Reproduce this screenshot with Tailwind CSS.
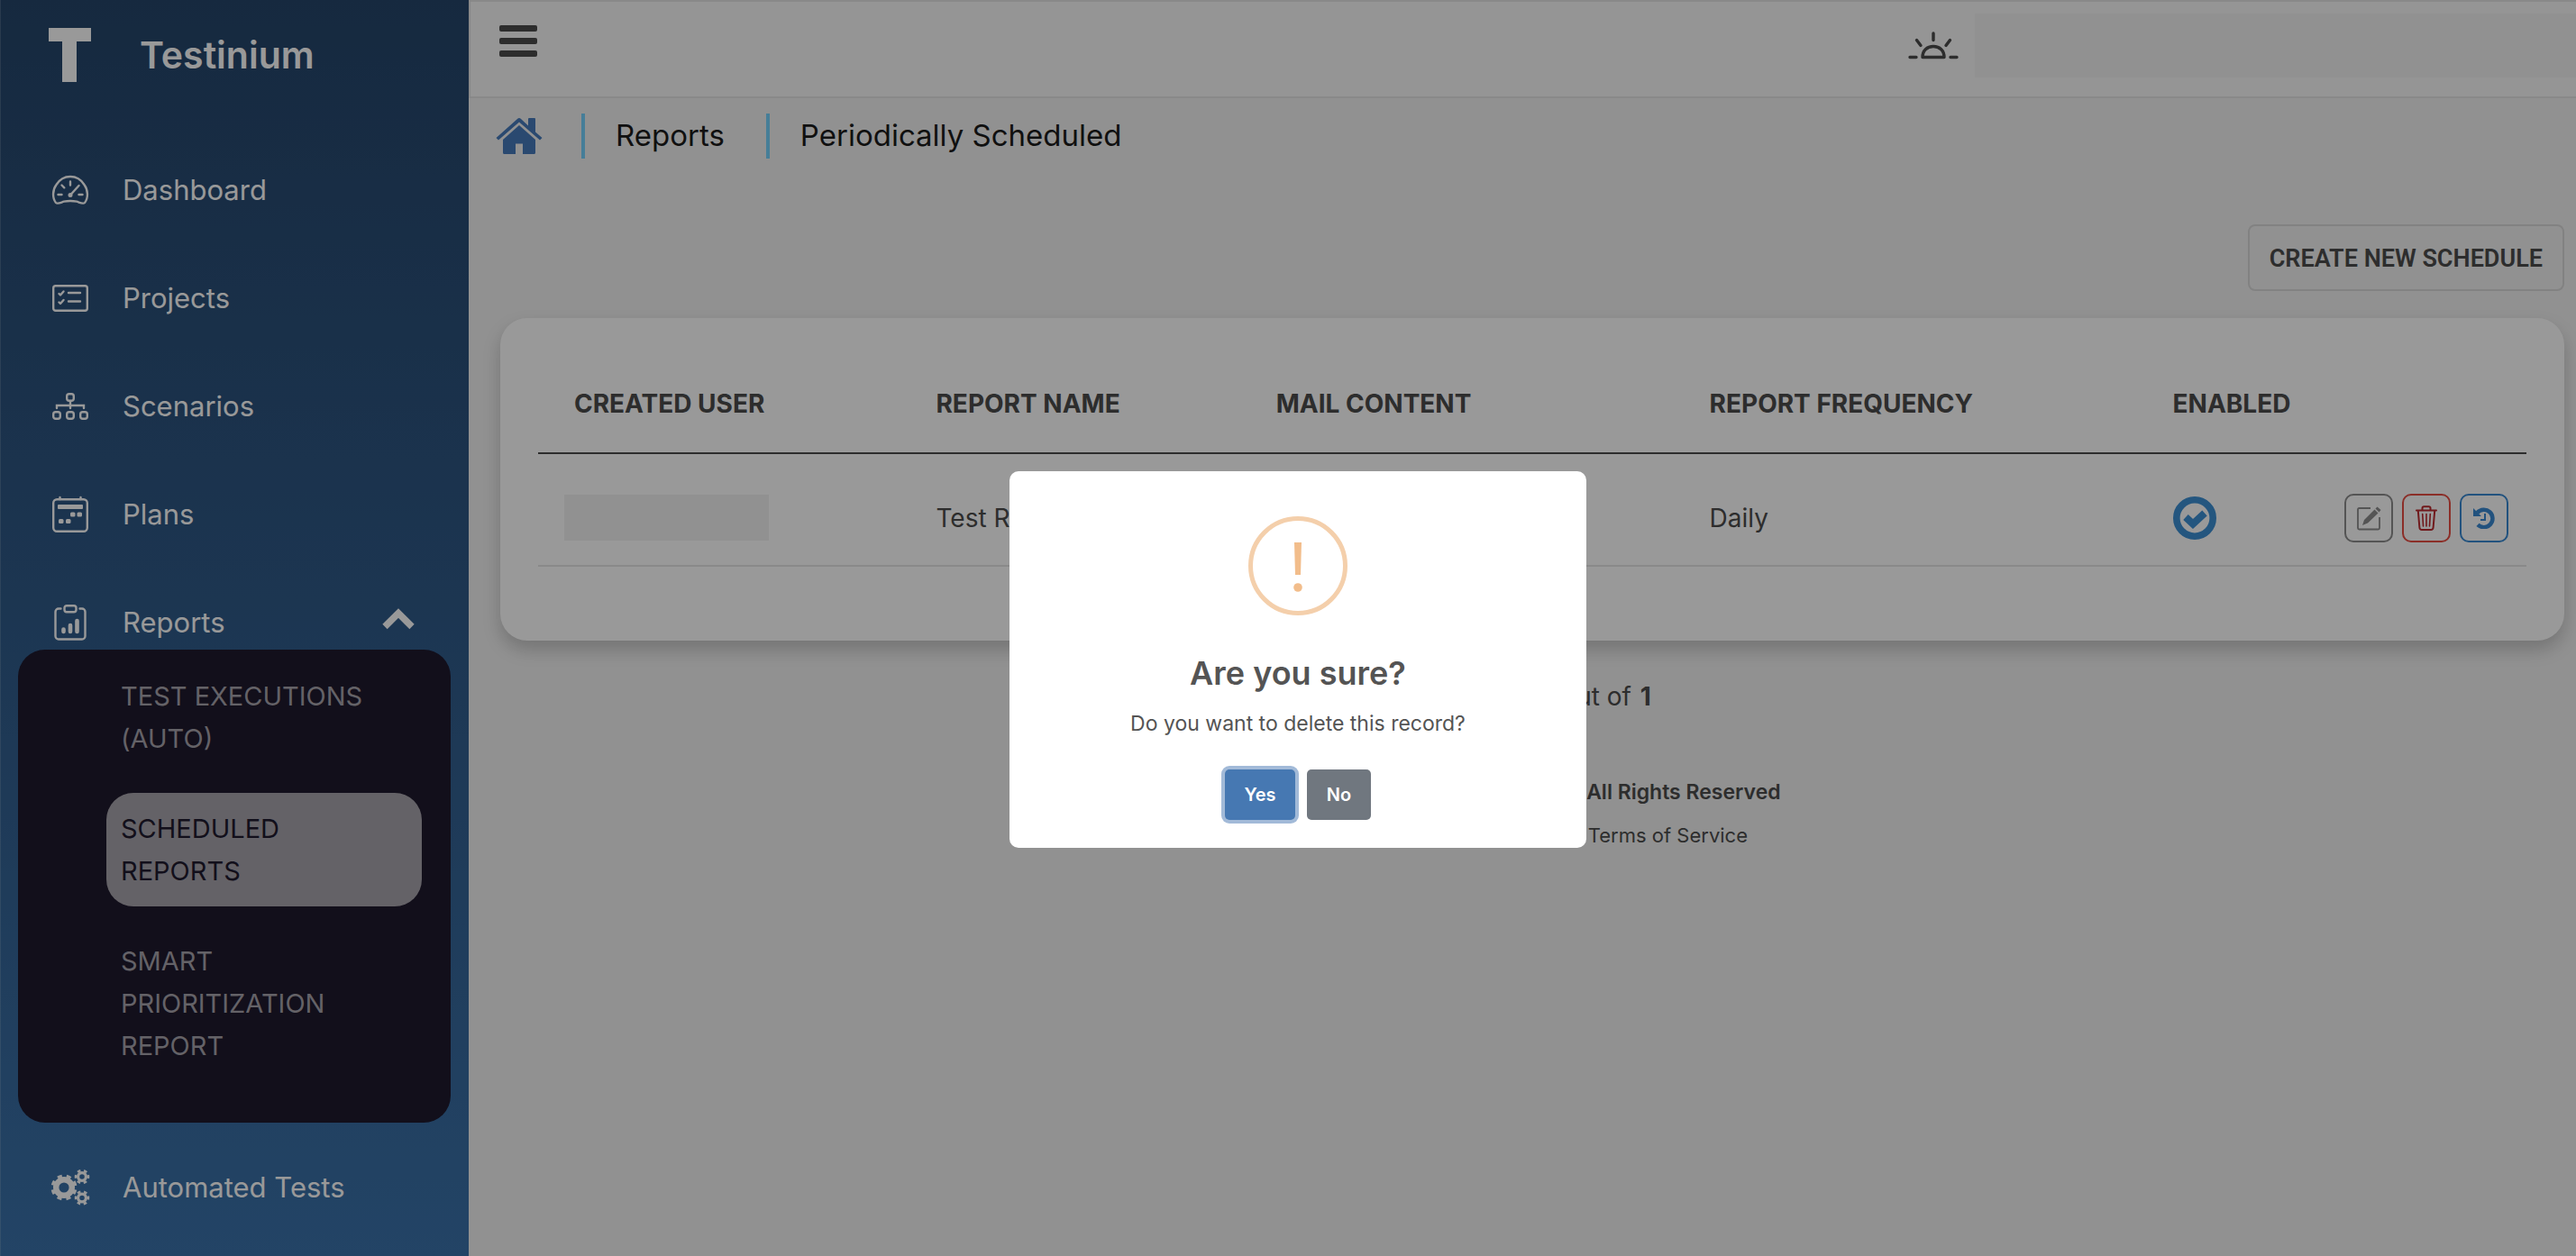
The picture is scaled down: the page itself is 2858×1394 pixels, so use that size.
<!DOCTYPE html>
<html lang="en">
<head>
<meta charset="utf-8">
<meta name="viewport" content="width=device-width, initial-scale=1">
<title>Testinium - Periodically Scheduled</title>
<script src="https://cdn.jsdelivr.net/npm/@tailwindcss/browser@4"></script>
</head>
<body class="font-['Inter',sans-serif] bg-[#f2f2f2] text-[#4b4b4b]">
<div class="flex min-h-screen">

  <!-- Sidebar -->
  <aside class="w-[520px] shrink-0 border-l border-white/15 bg-linear-to-b from-[#25456a] to-[#3b72aa] text-white">
    <a href="#" class="flex h-[121px] items-center pl-[53px]">
      <svg class="h-[60px] w-[47px]" viewBox="0 0 47 60" fill="currentColor" aria-hidden="true"><rect width="47" height="15"/><rect x="15" width="16" height="60"/></svg>
      <span class="pl-[54px] text-[41px] font-semibold leading-[60px]">Testinium</span>
    </a>
    <nav class="pt-[60px] text-[31px]">
      <ul class="flex flex-col gap-[60px]">
        <li><a href="#" class="flex h-[60px] items-center gap-9 pl-[55px]">
          <svg class="h-11 w-11" viewBox="0 0 44 44" fill="none" stroke="currentColor" stroke-width="2.4" stroke-linecap="round" aria-hidden="true">
            <path d="M6 36C2 31 2 22 6.500 16C14 4 30 4 37.500 16C42 22 42 31 38 36C36 38 32 35.500 29 34.700Q22 33.200 15 34.700C12 35.500 8 38 6 36Z"/>
            <path d="M22 12.500v4M12.500 16.500l2.800 2.800M8.500 27h4M31.500 27h4"/><path d="M22 27.500L31.500 17"/><circle cx="22" cy="27.500" r="1.300" fill="currentColor"/>
          </svg>Dashboard</a></li>
        <li><a href="#" class="flex h-[60px] items-center gap-9 pl-[55px]">
          <svg class="h-11 w-11" viewBox="0 0 44 44" fill="none" stroke="currentColor" stroke-width="2.400" stroke-linecap="round" stroke-linejoin="round" aria-hidden="true">
            <rect x="3.200" y="8.200" width="37.600" height="27.600" rx="2.500"/><path d="M20 16h13M20 25.500h13M9.500 17l1.500 1.500l3.500-4M9.500 26.500l1.500 1.500l3.500-4"/>
          </svg>Projects</a></li>
        <li><a href="#" class="flex h-[60px] items-center gap-9 pl-[55px]">
          <svg class="h-11 w-11" viewBox="0 0 44 44" fill="none" stroke="currentColor" stroke-width="2.400" stroke-linecap="round" aria-hidden="true">
            <rect x="18.200" y="8.200" width="7.600" height="7.600" rx="2.500"/><rect x="3.200" y="28.200" width="7.600" height="7.600" rx="2.500"/><rect x="18.200" y="28.200" width="7.600" height="7.600" rx="2.500"/><rect x="33.200" y="28.200" width="7.600" height="7.600" rx="2.500"/>
            <path d="M22 16v8M7 24v-3h30v3"/>
          </svg>Scenarios</a></li>
        <li><a href="#" class="flex h-[60px] items-center gap-9 pl-[55px]">
          <svg class="h-11 w-11" viewBox="0 0 44 44" fill="none" stroke="currentColor" stroke-width="2.400" stroke-linecap="round" aria-hidden="true">
            <rect x="3.200" y="5.200" width="37.600" height="35.600" rx="4"/><path d="M10.500 3v2M33.500 3v2"/>
            <g fill="currentColor" stroke="none"><rect x="8" y="11" width="28" height="5" rx="1"/><rect x="22" y="19.500" width="5.500" height="5" rx="1.500"/><rect x="29.500" y="19.500" width="5.500" height="5" rx="1.500"/><rect x="9" y="27" width="5.500" height="5" rx="1.500"/><rect x="17" y="27" width="5.500" height="5" rx="1.500"/></g>
          </svg>Plans</a></li>
        <li>
          <a href="#" class="flex h-[60px] items-center gap-9 pl-[55px] pr-[60px]">
            <svg class="h-11 w-11" viewBox="0 0 44 44" fill="none" stroke="currentColor" stroke-width="2.400" stroke-linecap="round" aria-hidden="true">
              <path d="M11.500 6.500H9A3.500 3.500 0 0 0 5.500 10v27A3.500 3.500 0 0 0 9 40.500h26A3.500 3.500 0 0 0 38.500 37V10A3.500 3.500 0 0 0 35 6.500H32.500"/><rect x="15.500" y="3.200" width="13" height="7" rx="2.500"/>
              <path d="M14.500 29.500v2.500M22 25v7M29.500 20v12" stroke-width="4.600"/>
            </svg>
            <span class="flex-1">Reports</span>
            <svg class="mb-2 h-6 w-9" viewBox="0 0 36 24" fill="none" stroke="currentColor" stroke-width="7.500" stroke-linejoin="miter" aria-hidden="true"><path d="M3 20.500L18 5.500L33 20.500"/></svg>
          </a>
          <ul class="ml-[19px] mr-5 flex flex-col gap-[21px] rounded-[30px] bg-[#1e192d] pt-3 pr-8 pb-[46px] pl-[98px] text-[29px] leading-[47px] text-[#a7a3ac]">
            <li><a href="#" class="block rounded-[30px] p-4">TEST EXECUTIONS (AUTO)</a></li>
            <li><a href="#" aria-current="page" class="block rounded-[30px] bg-[#a7a3ac] p-4 text-[#1e192d]">SCHEDULED<br>REPORTS</a></li>
            <li><a href="#" class="block rounded-[30px] p-4">SMART PRIORITIZATION REPORT</a></li>
          </ul>
        </li>
        <li class="-mt-[18px]"><a href="#" class="flex h-[60px] items-center gap-9 pl-[55px]">
          <svg class="h-11 w-11" viewBox="0 0 44 44" fill="none" stroke="currentColor" aria-hidden="true">
            <circle cx="15" cy="22" r="8.800" stroke-width="6.400"/><circle cx="15" cy="22" r="12.700" stroke-width="3.600" stroke-dasharray="4.987 4.987" transform="rotate(11 15 22)"/>
            <circle cx="35" cy="10" r="4.400" stroke-width="3.200"/><circle cx="35" cy="10" r="6.900" stroke-width="2.800" stroke-dasharray="3.613 3.613" transform="rotate(-15 35 10)"/>
            <circle cx="35" cy="33.500" r="4.400" stroke-width="3.200"/><circle cx="35" cy="33.500" r="6.900" stroke-width="2.800" stroke-dasharray="3.613 3.613" transform="rotate(-15 35 33.500)"/>
          </svg>Automated Tests</a></li>
      </ul>
    </nav>
  </aside>

  <!-- Content -->
  <div class="min-w-0 flex-1">
    <header class="flex h-[109px] items-start justify-between border-2 border-r-0 border-[#e4e4e4] bg-[#f8f8f8]">
      <button type="button" aria-label="Toggle menu" class="ml-8 mt-[26px] flex w-[42px] flex-col gap-[7px]">
        <span class="h-[7px] rounded-xs bg-[#4b4b4b]"></span><span class="h-[7px] rounded-xs bg-[#4b4b4b]"></span><span class="h-[7px] rounded-xs bg-[#4b4b4b]"></span>
      </button>
      <div class="flex items-start">
        <button type="button" aria-label="Toggle theme" class="mr-[18px] mt-[33px]">
          <svg class="h-8 w-14" viewBox="0 0 56 32" fill="none" stroke="#4b4b4b" stroke-width="3.400" stroke-linecap="round" stroke-linejoin="round" aria-hidden="true"><path d="M28 2v7.500M9.500 9.500l4.500 6M46.500 9.500l-4.500 6M2 28.500h7M47 28.500h7M16 28.500c0-7.500 5-12 12-12s12 4.500 12 12z"/></svg>
        </button>
        <div class="mt-[13px] h-[71px] w-[667px] bg-[#f2f2f2]"></div>
      </div>
    </header>

    <nav aria-label="Breadcrumb" class="flex h-[84px] items-center pl-[30px] text-[33px] text-[#1c1c1c]">
      <a href="#" aria-label="Home"><svg class="h-10 w-[52px]" viewBox="0 0 52 40" fill="#467bbb" aria-hidden="true"><path d="M26 0Q27 0 28 1L36 8.500V1Q36 0 37 0H43Q44 0 44 1V15.500L51.500 22L49 24.500L26 4.500L3 24.500L.5 22L24 1Q25 0 26 0Z"/><path d="M26 8L44 24V38.500Q44 40 42.500 40H30V28.500H22V40H9.500Q8 40 8 38.500V24Z"/></svg></a>
      <span class="ml-[43px] h-[50px] w-1 bg-[#76d2fd]"></span>
      <a href="#" class="ml-[34px]">Reports</a>
      <span class="ml-[46px] h-[50px] w-1 bg-[#76d2fd]"></span>
      <span class="ml-[34px]">Periodically Scheduled</span>
    </nav>

    <main class="pl-[35px] pr-[13px] pt-14">
      <div class="flex justify-end">
        <button type="button" class="h-[74px] rounded-lg border-2 border-[#d9d9d9] px-[22px] pt-0.5 font-['Roboto',sans-serif] text-[27px] font-semibold">CREATE NEW SCHEDULE</button>
      </div>
      <section class="mt-[30px] rounded-[30px] bg-white px-[42px] pb-[82px] pt-[38px] shadow-[0_10px_20px_rgba(0,0,0,0.2)]">
        <table class="w-full table-fixed text-left text-[28px]">
          <colgroup><col class="w-[18.200%]"><col class="w-[17.100%]"><col class="w-[21.800%]"><col class="w-[23.300%]"><col></colgroup>
          <thead>
            <tr class="h-[112px] border-b-2 border-[#4b4b4b]">
              <th scope="col" class="pl-10 pt-0.5 font-bold">CREATED USER</th><th scope="col" class="pl-10 pt-0.5 font-bold">REPORT NAME</th><th scope="col" class="pl-10 pt-0.5 font-bold">MAIL CONTENT</th><th scope="col" class="pl-10 pt-0.5 font-bold">REPORT FREQUENCY</th><th scope="col" class="pl-10 pt-0.5 font-bold">ENABLED</th>
            </tr>
          </thead>
          <tbody>
            <tr class="h-[125px] border-b-2 border-[#e4e4e4]">
              <td class="pl-[29px] pt-[18px]"><div class="h-[51px] w-[227px] bg-[#f2f2f2]"></div></td>
              <td class="pl-10 pt-[18px]">Test Report</td>
              <td class="pt-[18px]"></td>
              <td class="pl-10 pt-[18px]">Daily</td>
              <td class="pl-10 pr-5 pt-[18px]">
                <div class="flex items-center justify-between">
                  <svg class="h-12 w-12" viewBox="0 0 48 48" fill="none" stroke="#3c8fd4" role="img" aria-label="Enabled"><circle cx="24" cy="24" r="20.200" stroke-width="7.600"/><path d="M14 23L22 30.500L35 18.500" stroke-width="8" stroke-linejoin="miter"/></svg>
                  <div class="flex gap-[10px]">
                    <button type="button" aria-label="Edit" class="grid size-[54px] place-items-center rounded-[10px] border-2 border-[#8c8c8c]">
                      <svg class="h-7 w-7" viewBox="0 0 28 28" fill="none" stroke="#8c8c8c" stroke-width="1.800" aria-hidden="true"><path d="M16 3H3.500Q2 3 2 4.500V25Q2 26.500 3.500 26.500H24.500Q26 26.500 26 25V13"/><path d="M7 22L9 16L20.500 4.500L24.500 8.500L13 19.500ZM21.500 3.500L23.500 1.500L27.500 5L25.500 7.500Z" fill="#8c8c8c" stroke="none"/></svg>
                    </button>
                    <button type="button" aria-label="Delete" class="grid size-[54px] place-items-center rounded-[10px] border-2 border-[#e84e43]">
                      <svg class="h-7 w-7" viewBox="0 0 28 28" fill="none" stroke="#bb2b2f" stroke-width="2" stroke-linecap="round" stroke-linejoin="round" aria-hidden="true"><path d="M3 5.500H25M9.500 5V3Q9.500 1.200 11.300 1.200H16.700Q18.500 1.200 18.500 3V5M4.800 6L6.400 24.500Q6.600 27 9 27H19Q21.400 27 21.600 24.500L23.200 6"/><path d="M9.700 9.500L10.500 23M14 9.500V23M18.300 9.500L17.500 23" stroke-width="1.600"/></svg>
                    </button>
                    <button type="button" aria-label="Run again" class="grid size-[54px] place-items-center rounded-[10px] border-2 border-[#3989d2]">
                      <svg class="h-6 w-6" viewBox="0 0 24 24" fill="none" stroke="#3989d2" aria-hidden="true"><path d="M4.500 6A9.700 9.700 0 1 1 5 19.400" stroke-width="4.500"/><path d="M0 1L9 10H0Z" fill="#3989d2" stroke="none"/><path d="M13 7V14H8" stroke-width="2"/></svg>
                    </button>
                  </div>
                </div>
              </td>
            </tr>
          </tbody>
        </table>
      </section>
      <p class="mt-[42px] text-center text-[28px] leading-10">Displaying 1 out of <b class="ml-0.5">1</b></p>
      <footer class="mt-[62px] text-center leading-12">
        <p class="text-[23px] font-semibold">Copyright © 2023 Testinium | All Rights Reserved</p>
        <p class="text-[22px]"><a href="#">Privacy and Cookies Policy</a> | <a href="#">Terms of Service</a></p>
      </footer>
    </main>
  </div>
</div>

<!-- Confirmation dialog -->
<div class="fixed inset-0 flex items-center justify-center bg-black/40 pt-[70px] pl-[22px]">
  <div role="alertdialog" aria-modal="true" aria-labelledby="dialog-title" aria-describedby="dialog-text" class="flex h-[418px] w-[640px] flex-col items-center rounded-[10px] bg-white pt-[50px] text-[#545454]">
    <svg class="h-[110px] w-[110px]" viewBox="0 0 110 110" fill="none" aria-hidden="true"><circle cx="55" cy="55" r="52.500" stroke="#f4cfab" stroke-width="5"/><path d="M51 29H59L58 65H52Z" fill="#f2bd8b"/><circle cx="55" cy="79" r="4.800" fill="#f2bd8b"/></svg>
    <h2 id="dialog-title" class="mt-10 text-[36px] font-semibold leading-[48px]">Are you sure?</h2>
    <p id="dialog-text" class="mt-4 text-[23px] leading-8">Do you want to delete this record?</p>
    <div class="mt-[35px] flex gap-[13px] text-[20px] font-semibold text-white">
      <button type="button" class="h-14 w-[78px] rounded-[5px] bg-[#4678b2] ring-4 ring-[#a2bad8]">Yes</button>
      <button type="button" class="h-14 w-[71px] rounded-[5px] bg-[#70777f]">No</button>
    </div>
  </div>
</div>
</body>
</html>
